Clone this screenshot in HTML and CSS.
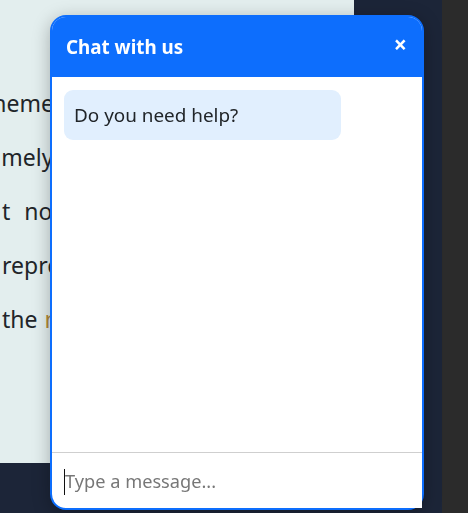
FILE: index.html
```html
<!DOCTYPE html>
<html lang="en">
<head>
<meta charset="utf-8">
<title>Chat</title>
<link rel="stylesheet" href="styles.css">
</head>
<body>
<div class="app">
  <main class="panel">
    <p class="line first">theme parks and the garden walks</p>
    <p class="line second">timely designed for every season</p>
    <p class="line wide">t now open to all our visitors</p>
    <p class="line">representing the local history</p>
    <p class="line mid">the <span class="mark">m</span>ain hall and its galleries</p>
  </main>
</div>
<aside class="chat">
  <header class="chat-head">
    <h2 class="chat-title">Chat with us</h2>
    <button class="chat-close" type="button" aria-label="Close">&times;</button>
  </header>
  <div class="chat-body">
    <div class="bubble">Do you need help?</div>
  </div>
  <div class="chat-foot">
    <span class="caret"></span>
    <input class="chat-input" type="text" placeholder="Type a message...">
  </div>
</aside>
</body>
</html>
```
FILE: styles.css
```css
* { box-sizing: border-box; }
html, body { margin: 0; padding: 0; }
body {
  width: 468px;
  height: 513px;
  overflow: hidden;
  background: #2b2b2b;
  font-family: "Noto Sans", "Open Sans", sans-serif;
  color: #212529;
}
.app {
  width: 442px;
  height: 513px;
  background: #1c2538;
}
.panel {
  width: 354px;
  height: 463px;
  background: #e3eeee;
  overflow: hidden;
  padding-top: 76px;
  padding-left: 2px;
}
.line {
  margin: 0;
  font-size: 23px;
  line-height: 54px;
  white-space: nowrap;
  color: #212529;
}
.first { margin-left: -18px; }
.second { margin-left: -15px; }
.wide { word-spacing: 8px; }
.mid { word-spacing: 1px; }
.mark { color: #b08a3a; }
.chat {
  position: fixed;
  left: 50px;
  top: 15px;
  width: 374px;
  height: 495px;
  border: 2px solid #0d6efd;
  border-radius: 16px;
  background: #fff;
  box-shadow: 0 4px 18px rgba(0, 0, 0, 0.28);
  display: flex;
  flex-direction: column;
}
.chat-head {
  height: 60px;
  flex: none;
  background: #0d6efd;
  border-radius: 14px 14px 0 0;
  display: flex;
  align-items: center;
  justify-content: space-between;
  padding: 0 14px 0 14px;
}
.chat-title {
  margin: 0;
  color: #fff;
  font-size: 18.8px;
  font-weight: 700;
  line-height: 28px;
}
.chat-close {
  background: none;
  border: 0;
  padding: 0;
  color: #fff;
  font-family: "Noto Sans", sans-serif;
  font-weight: 700;
  font-size: 23px;
  line-height: 22px;
  margin-top: -6px;
  margin-right: 1px;
  cursor: pointer;
}
.chat-body {
  flex: 1;
  padding: 13px 12px 12px;
  border-bottom: 1px solid #cfcfcf;
}
.bubble {
  max-width: 80%;
  background: #e1effe;
  border-radius: 9px;
  padding: 10px;
  font-size: 18.9px;
  line-height: 30px;
}
.chat-foot {
  height: 55px;
  flex: none;
  display: flex;
  align-items: center;
  padding-left: 12px;
}
.caret {
  width: 1px;
  height: 26px;
  background: #111;
  flex: none;
  margin-top: 2px;
}
.chat-input {
  flex: 1;
  height: 100%;
  border: 0;
  outline: none;
  background: #fff;
  padding: 0;
  font-family: "Noto Sans", sans-serif;
  font-size: 18.2px;
  color: #212529;
}
.chat-input::placeholder { color: #777; }
```
